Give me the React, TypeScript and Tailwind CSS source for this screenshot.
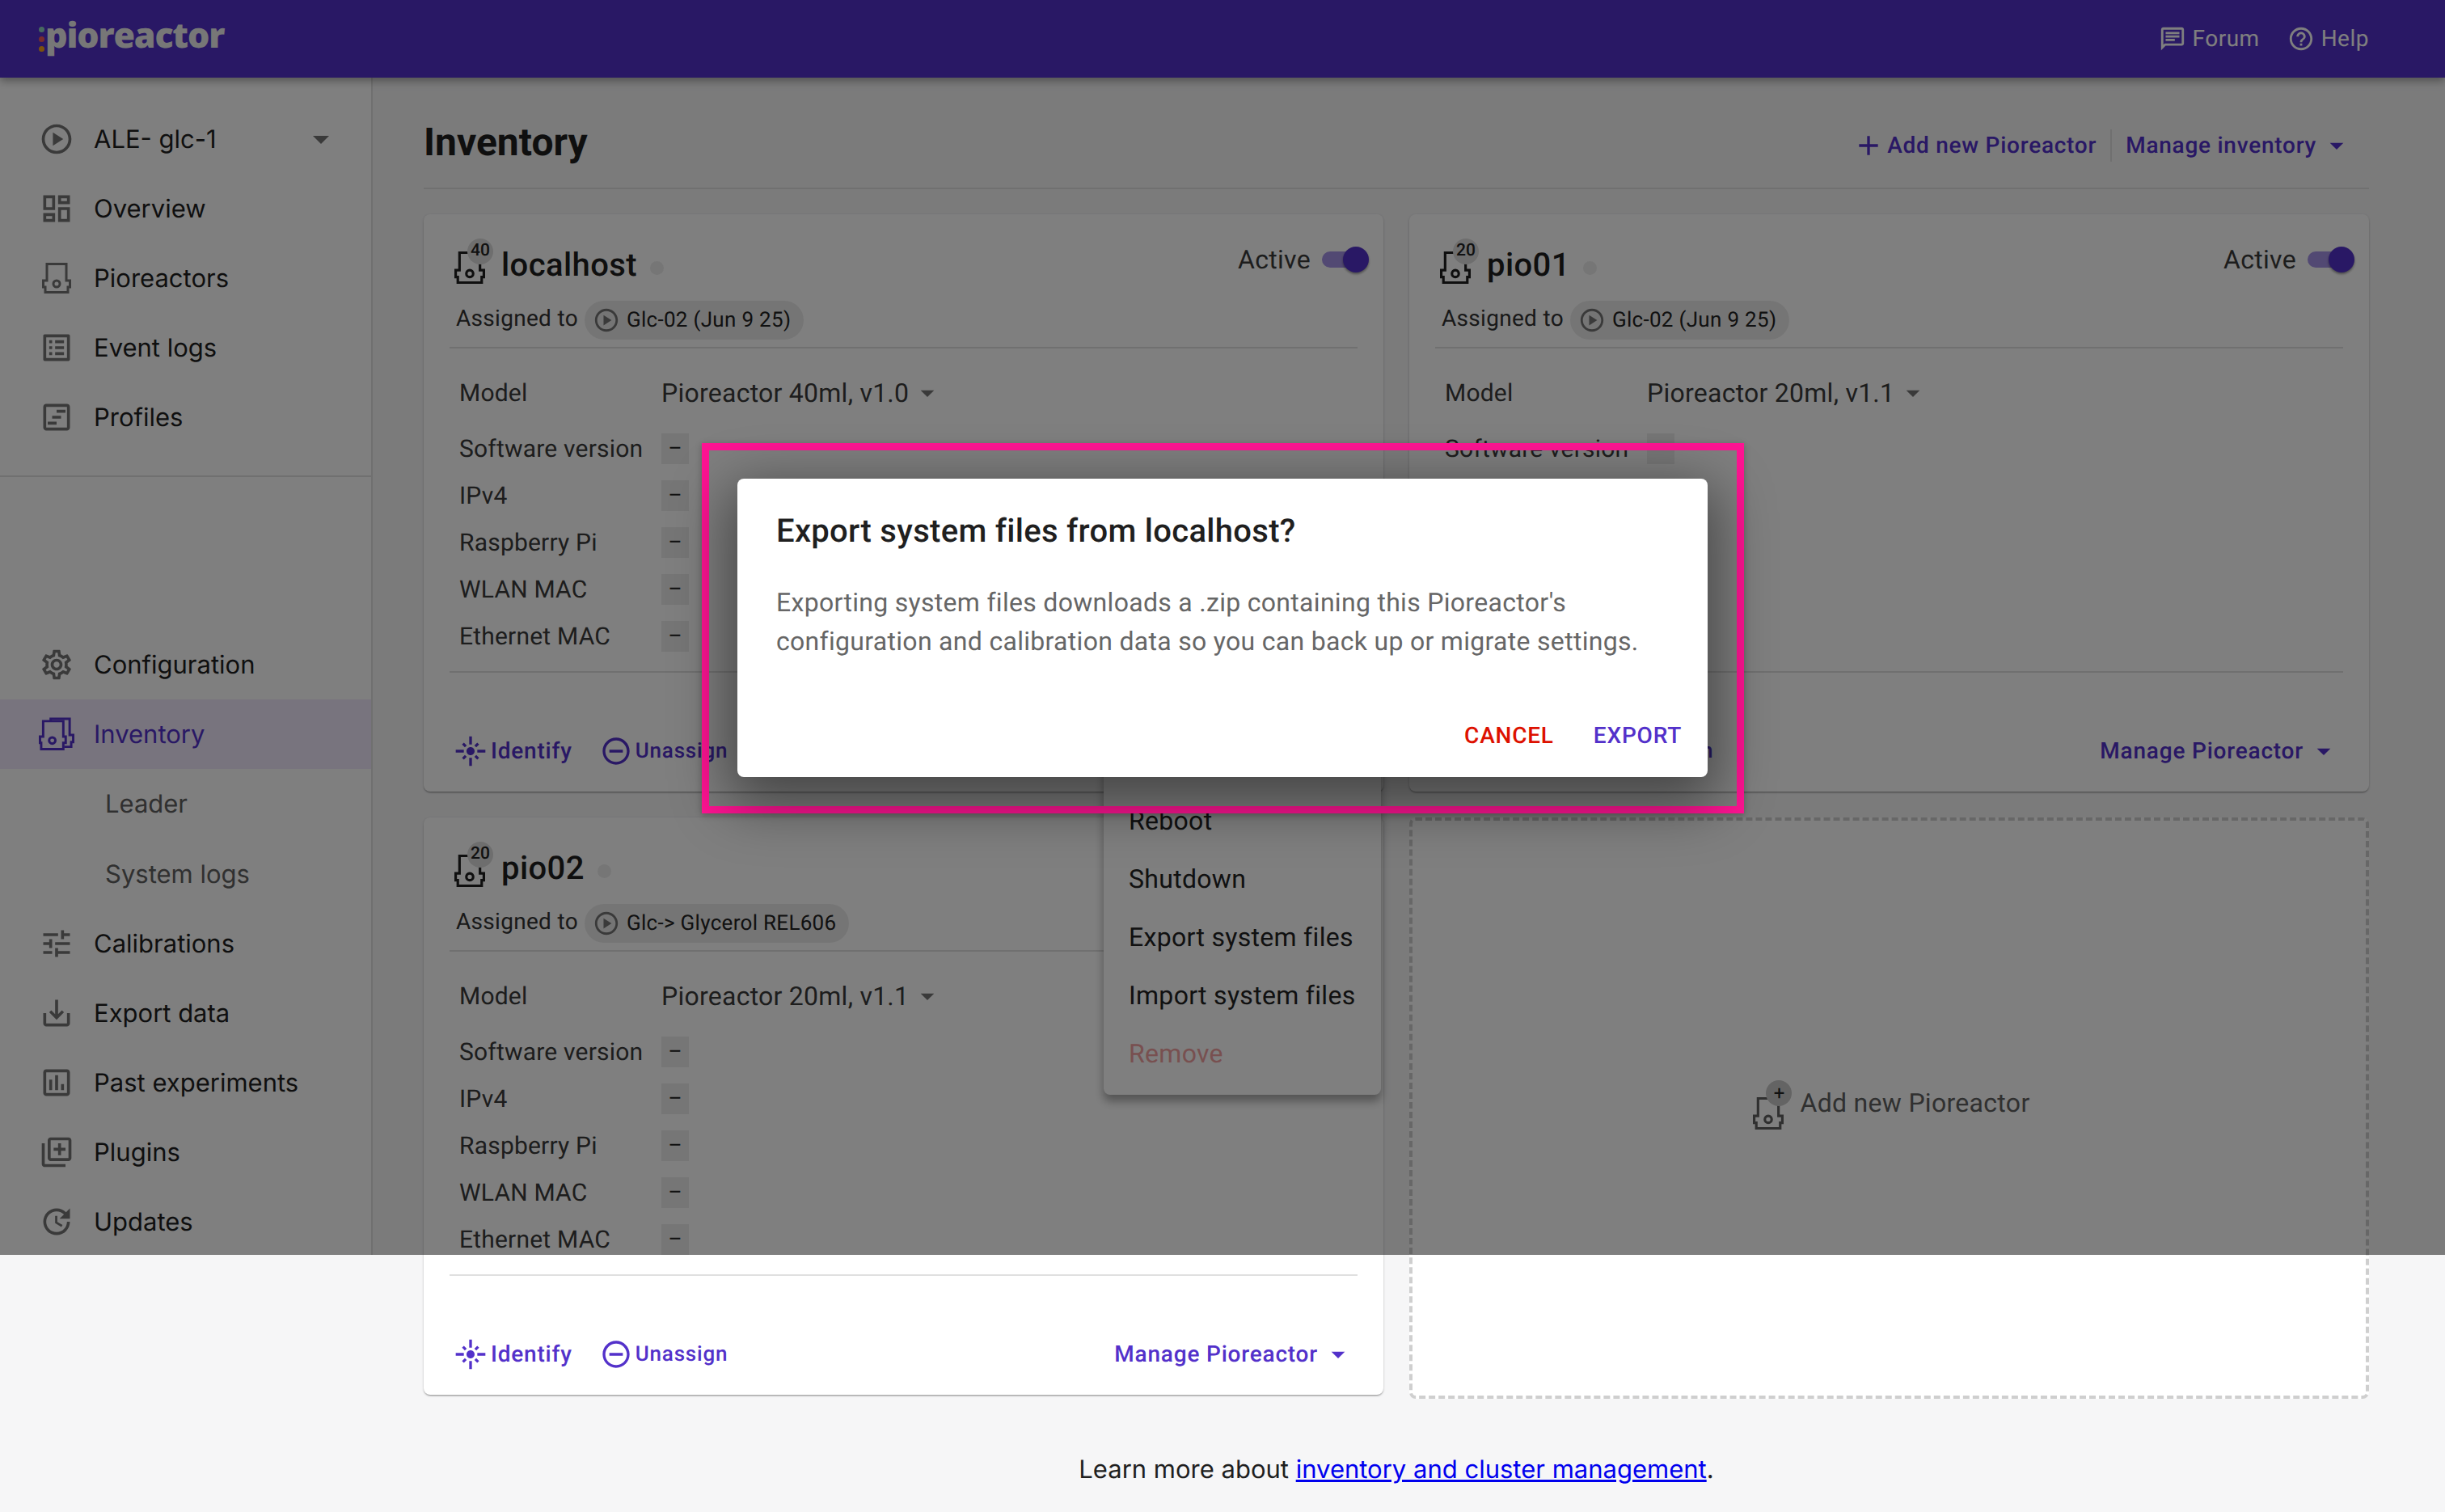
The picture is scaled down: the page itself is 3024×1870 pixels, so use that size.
import React from "react";
import {
  MdOutlinePlayCircle, MdArrowDropDown, MdOutlineDashboard, MdOutlineListAlt, MdOutlineViewTimeline,
  MdOutlineSettings, MdOutlineTune, MdSaveAlt, MdOutlineInsertChart, MdOutlineLibraryAdd, MdOutlineUpdate,
  MdOutlineChat, MdHelpOutline, MdAdd, MdFlare, MdOutlineDoDisturbOn,
} from "react-icons/md";

function PioIcon({ className = "" }: { className?: string }) {
  return (
    <svg viewBox="0 0 36 38" className={className} fill="none" stroke="currentColor" strokeWidth="3">
      <path d="M6 1.5H30V22H34.5V30H32V36.5H4V30H1.5V22H6Z" />
      <circle cx="18" cy="26" r="4" />
    </svg>
  );
}

function InventoryIcon({ className = "" }: { className?: string }) {
  return (
    <svg viewBox="0 0 45 42" className={className} fill="none" stroke="currentColor" strokeWidth="3">
      <path d="M5.5 4.5H31V24H34V32H31V40H3V32H1.5V24H5.5Z" />
      <path d="M15 4V1.5H39V22H43.5V31H41V37H32" />
      <circle cx="17" cy="29" r="4" />
    </svg>
  );
}

function SideRow({ icon, label, active, trailing }: { icon?: React.ReactNode; label: string; active?: boolean; trailing?: React.ReactNode }) {
  return (
    <div className={`h-[86px] flex items-center pl-[48px] ${active ? "bg-[#f0e8fd] text-[#5331ca]" : "text-[#1f1f1f]"}`}>
      <div className={`w-[44px] flex justify-center shrink-0 ${active ? "text-[#5331ca]" : "text-[#757575]"}`}>{icon}</div>
      <span className="ml-[24px] pt-[2px] font-['Inter',sans-serif] text-[31px]">{label}</span>
      {trailing}
    </div>
  );
}

function SubRow({ label }: { label: string }) {
  return (
    <div className="h-[86.5px] flex items-center pl-[130px] pt-[2px] font-['Inter',sans-serif] text-[31px] text-[#616161]">{label}</div>
  );
}

function InfoRow({ label }: { label: string }) {
  return (
    <div className="h-[58px] flex items-center pl-[12px]">
      <span className="w-[250px] text-[30px] tracking-[0.2px] text-[#3a3a3a]">{label}</span>
      <span className="w-[34px] h-[38px] bg-[#ececec] flex items-center justify-center text-[26px] text-[#222]">–</span>
    </div>
  );
}

function Card({ size, name, chip, model, active = true }: { size: string; name: string; chip: string; model: string; active?: boolean }) {
  return (
    <div className="relative h-[714px] mb-[5px] bg-white rounded-[8px] shadow-[0_2px_2px_-1px_rgba(0,0,0,0.3),0_1px_3px_0_rgba(0,0,0,0.2)] px-[32px] pt-[32px] flex flex-col">
      <div className="h-[62px] flex items-center pl-[6px]">
        <div className="relative w-[38px] h-[42px] text-[#1f1f1f] mt-[6px]">
          <PioIcon className="w-[38px] h-[42px]" />
          <span className="absolute left-[16px] top-[-15px] w-[32px] h-[32px] rounded-full bg-[#dcdcdc] flex items-center justify-center text-[21px] font-medium text-[#222]">{size}</span>
        </div>
        <span className="ml-[20px] text-[40px] leading-none text-[#1f1f1f] font-medium tracking-[0.4px]">{name}</span>
        <span className="ml-[16px] mt-[6px] w-[17px] h-[17px] rounded-full bg-[#ececec]" />
        {active && (
          <div className="ml-auto flex items-center mt-[-14px]">
            <span className="text-[32px] tracking-[0.3px] text-[#3a3a3a]">Active</span>
            <div className="relative ml-[14px] w-[58px] h-[32px] mr-[-14px]">
              <div className="absolute left-0 top-[6px] w-[44px] h-[20px] rounded-full bg-[#a592e6]" />
              <div className="absolute right-0 top-0 w-[32px] h-[32px] rounded-full bg-[#5331ca] shadow-[0_2px_3px_rgba(0,0,0,0.4)]" />
            </div>
          </div>
        )}
      </div>
      <div className="mt-[13px] h-[48px] flex items-center pl-[8px]">
        <span className="text-[28px] text-[#333] tracking-[0.3px] mt-[-4px]">Assigned to</span>
        <div className="ml-[8px] h-[48px] rounded-full bg-[#ebebeb] flex items-center pl-[10px] pr-[16px]">
          <MdOutlinePlayCircle className="w-[34px] h-[34px] text-[#757575]" />
          <span className="ml-[8px] text-[26px] tracking-[0.3px] text-[#222]">{chip}</span>
        </div>
      </div>
      <div className="mt-[9px] h-[2px] bg-[#e0e0e0]" />
      <div className="mt-[31px] h-[48px] flex items-center pl-[12px]">
        <span className="w-[250px] text-[30px] tracking-[0.2px] text-[#3a3a3a]">Model</span>
        <span className="text-[32px] text-[#3a3a3a] tracking-[0.25px]">{model}</span>
        <MdArrowDropDown className="ml-[3px] w-[40px] h-[40px] text-[#757575]" />
      </div>
      <div className="mt-[16px] flex flex-col">
        {["Software version", "IPv4", "Raspberry Pi", "WLAN MAC", "Ethernet MAC"].map((l) => (
          <InfoRow key={l} label={l} />
        ))}
      </div>
      <div className="mt-[14px] h-[2px] bg-[#e0e0e0]" />
      <div className="mt-[72px] h-[50px] flex items-center pl-[6px] pr-[4px] text-[#5331ca] text-[28px] font-medium tracking-[0.8px]">
        <MdFlare className="w-[40px] h-[40px]" />
        <span className="ml-[5px]">Identify</span>
        <MdOutlineDoDisturbOn className="ml-[34px] w-[40px] h-[40px]" />
        <span className="ml-[4px] text-[26px]">Unassign</span>
        <span className="ml-auto">Manage Pioreactor</span>
        <MdArrowDropDown className="ml-[5px] w-[40px] h-[40px]" />
      </div>
    </div>
  );
}

export default function App() {
  return (
    <div className="relative w-[3024px] h-[1870px] overflow-hidden bg-[#f6f6f7] font-['Roboto',sans-serif] [text-rendering:geometricPrecision]">
      <header className="relative z-10 h-[96px] bg-[#5331ca] shadow-[0_4px_10px_rgba(0,0,0,0.35)] flex items-center pl-[48px] pr-[94px] text-white">
        <div className="flex items-center h-full">
          <div className="flex flex-col gap-[5px]">
            <span className="w-[7px] h-[7px] rounded-full bg-[#8fd3c0]" />
            <span className="w-[7px] h-[7px] rounded-full bg-[#ef5a5a]" />
            <span className="w-[7px] h-[7px] rounded-full bg-[#f7a21b]" />
          </div>
          <span className="ml-[1px] mt-[-12px] font-['Open_Sans',sans-serif] font-extrabold text-[43px] tracking-[-1.2px] text-[#eeeeee] leading-none">pioreactor</span>
        </div>
        <div className="ml-auto flex items-center text-[28px] tracking-[0.5px]">
          <MdOutlineChat className="w-[34px] h-[34px]" />
          <span className="ml-[8px]">Forum</span>
          <MdHelpOutline className="ml-[34px] w-[34px] h-[34px]" />
          <span className="ml-[8px]">Help</span>
        </div>
      </header>
      <div className="flex items-start">
        <aside className="w-[461px] h-[1456px] shrink-0 bg-white border-r-2 border-[#e0e0e0] pt-[33px]">
          <SideRow
            icon={<MdOutlinePlayCircle className="w-[44px] h-[44px]" />}
            label="ALE- glc-1"
            trailing={<MdArrowDropDown className="ml-auto mr-[38px] w-[48px] h-[48px] text-[#757575]" />}
          />
          <SideRow icon={<MdOutlineDashboard className="w-[44px] h-[44px]" />} label="Overview" />
          <SideRow icon={<PioIcon className="w-[36px] h-[38px]" />} label="Pioreactors" />
          <SideRow icon={<MdOutlineListAlt className="w-[44px] h-[44px]" />} label="Event logs" />
          <SideRow icon={<MdOutlineViewTimeline className="w-[44px] h-[44px]" />} label="Profiles" />
          <div className="mt-[29px] h-[2px] bg-[#e0e0e0]" />
          <div className="mt-[189px]">
            <SideRow icon={<MdOutlineSettings className="w-[44px] h-[44px]" />} label="Configuration" />
            <SideRow active icon={<InventoryIcon className="w-[45px] h-[42px]" />} label="Inventory" />
            <SubRow label="Leader" />
            <SubRow label="System logs" />
            <SideRow icon={<MdOutlineTune className="w-[44px] h-[44px]" />} label="Calibrations" />
            <SideRow icon={<MdSaveAlt className="w-[44px] h-[44px]" />} label="Export data" />
            <SideRow icon={<MdOutlineInsertChart className="w-[44px] h-[44px]" />} label="Past experiments" />
            <SideRow icon={<MdOutlineLibraryAdd className="w-[44px] h-[44px]" />} label="Plugins" />
            <SideRow icon={<MdOutlineUpdate className="w-[44px] h-[44px]" />} label="Updates" />
          </div>
        </aside>
        <main className="flex-1 pl-[63px] pr-[94px]">
          <div className="relative">
            <div className="h-[138px] flex items-center pt-[24px] border-b-2 border-[#e0e0e0]">
              <h1 className="text-[48px] font-bold text-[#1f1f1f] leading-none mt-[0px]">Inventory</h1>
              <div className="ml-auto flex items-center text-[#5331ca] text-[28px] font-medium tracking-[0.75px] mr-[20px] mt-[8px]">
                <MdAdd className="w-[40px] h-[40px]" />
                <span className="ml-[3px]">Add new Pioreactor</span>
                <span className="mx-[17px] w-[2px] h-[40px] bg-[#e0e0e0]" />
                <span>Manage inventory</span>
                <MdArrowDropDown className="ml-[5px] w-[40px] h-[40px]" />
              </div>
            </div>
            <div className="relative mt-[31px] grid grid-cols-2 gap-x-[32px] gap-y-[27px]">
              <Card size="40" name="localhost" chip="Glc-02 (Jun 9 25)" model="Pioreactor 40ml, v1.0" />
              <Card size="20" name="pio01" chip="Glc-02 (Jun 9 25)" model="Pioreactor 20ml, v1.1" />
              <Card size="20" name="pio02" chip="Glc-> Glycerol REL606" model="Pioreactor 20ml, v1.1" />
              <div className="border-[4px] border-dashed border-[#cfcfcf] rounded-[8px] bg-white flex items-center justify-center pb-[14px] pl-[6px]">
                <div className="relative w-[38px] h-[44px] text-[#616161] mt-[4px]">
                  <PioIcon className="w-[38px] h-[42px] mt-[12px]" />
                  <span className="absolute left-[16px] top-[-8px] w-[32px] h-[32px] rounded-full bg-[#c8c8c8] flex items-center justify-center text-[24px] text-[#222]">+</span>
                </div>
                <span className="ml-[20px] text-[32px] text-[#616161] tracking-[0.3px]">Add new Pioreactor</span>
              </div>
              <div className="absolute left-[841px] top-[500px] w-[343px] h-[589px] z-[1] bg-white rounded-[8px] shadow-[0_8px_12px_rgba(0,0,0,0.35)] pl-[31px] pt-[214px] flex flex-col text-[32px] text-[#222] tracking-[0.3px]">
                {["Reboot", "Shutdown", "Export system files", "Import system files"].map((t) => (
                  <span key={t} className="h-[72px] flex items-center">{t}</span>
                ))}
                <span className="h-[72px] flex items-center text-[#f0a0a0]">Remove</span>
              </div>
            </div>
            <p className="mt-[65px] text-center font-['Inter',sans-serif] text-[31px] text-[#1f1f1f]">
              Learn more about <a href="#" className="text-[#0000ee] underline">inventory and cluster management</a>.
            </p>
          </div>
        </main>
      </div>
      <div className="absolute left-0 top-0 w-full h-[1552px] bg-black/50 z-20" />
      <div className="absolute z-30 left-[868px] top-[548px] w-[1289px] h-[458px] border-[9px] border-[#ff1493] shadow-[0_2px_8px_rgba(0,0,0,0.25)]" />
      <div className="absolute z-40 left-[912px] top-[592px] w-[1200px] h-[369px] bg-white rounded-[8px] shadow-[0_22px_70px_12px_rgba(0,0,0,0.45)] flex flex-col">
        <h2 className="mt-[41px] ml-[48px] text-[40px] leading-[48px] font-medium text-[#1f1f1f] tracking-[0.3px]">Export system files from localhost?</h2>
        <p className="mt-[40px] ml-[48px] text-[32px] leading-[48px] text-[#666] tracking-[0.3px]">
          Exporting system files downloads a .zip containing this Pioreactor's<br />
          configuration and calibration data so you can back up or migrate settings.
        </p>
        <div className="mt-auto mb-[30px] mr-[32px] flex justify-end gap-[49px] text-[28px] font-medium tracking-[0.8px]">
          <span className="text-[#dd1100]">CANCEL</span>
          <span className="text-[#5331ca]">EXPORT</span>
        </div>
      </div>
    </div>
  );
}
